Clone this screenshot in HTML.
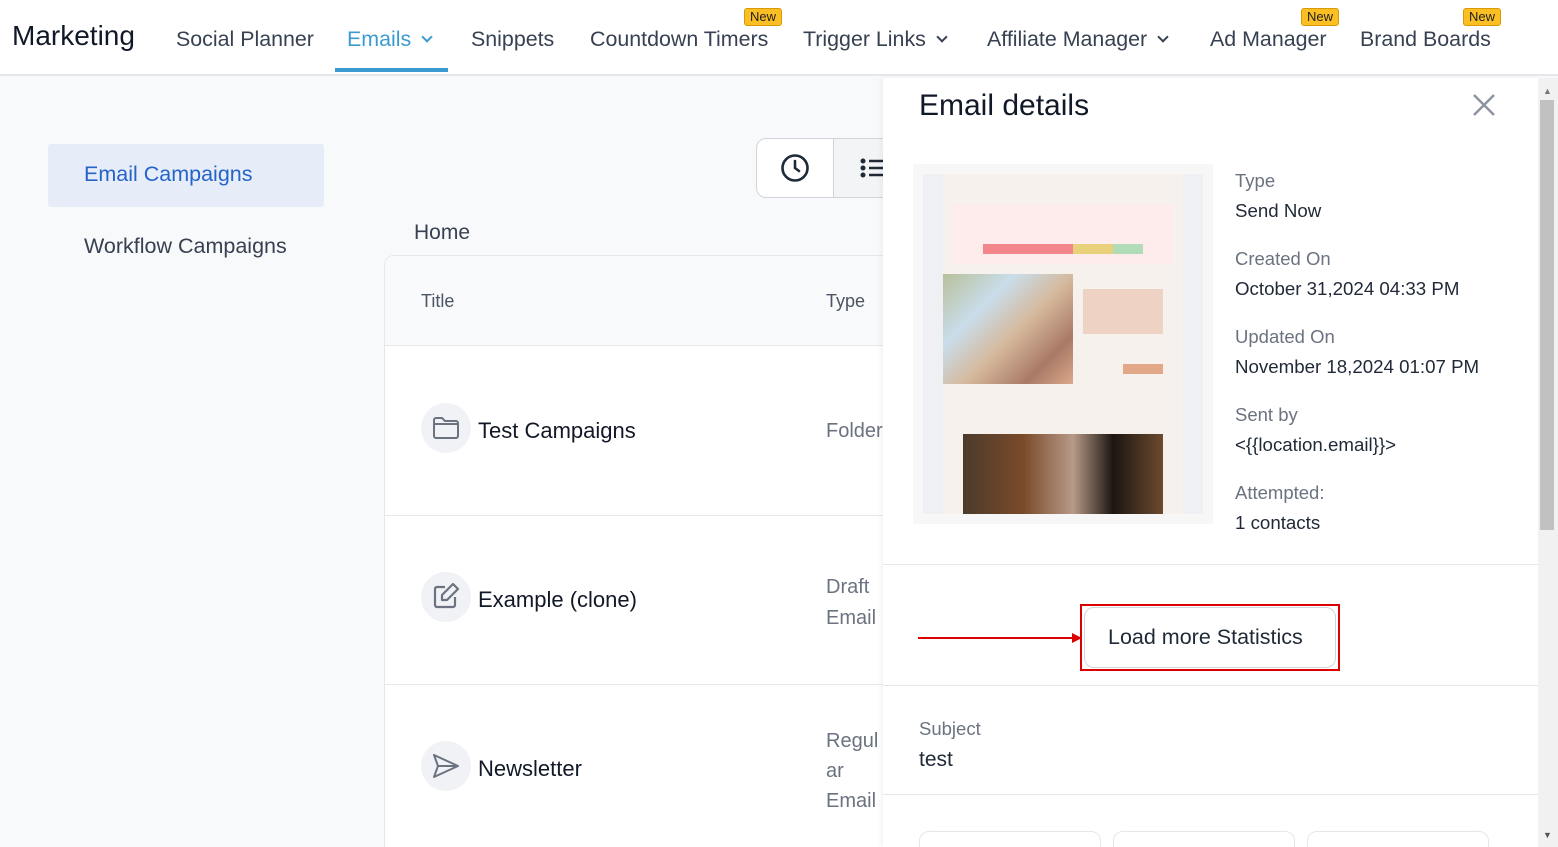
<!DOCTYPE html>
<html><head><meta charset="utf-8"><style>
*{box-sizing:border-box;margin:0;padding:0}
html,body{width:1558px;height:847px;overflow:hidden}
body{background:#f8f9fb;font-family:"Liberation Sans",sans-serif;position:relative;color:#111827}
.a{position:absolute;white-space:nowrap}
.nav{font-size:21.4px;color:#374151;top:27px}
.new{position:absolute;background:#fbbf24;border:1px solid #d99a06;color:#222;font-size:13px;padding:0 5px;border-radius:3px;height:18px;line-height:16px}
.chev{display:inline-block;width:8px;height:8px;border-right:2.5px solid currentColor;border-bottom:2.5px solid currentColor;transform:rotate(45deg);margin-left:12px;position:relative;top:-5px}
.lbl{color:#6b7280;font-size:18.5px}
.val{color:#1f2937;font-size:18.7px}
.circ{position:absolute;width:50px;height:50px;border-radius:50%;background:#f1f2f5}
</style></head><body>
<div class="a" style="left:0;top:0;width:1558px;height:76px;background:#fff;border-bottom:2px solid #e5e7eb"></div>
<div class="a" style="left:12px;top:20px;font-size:28px;color:#111827">Marketing</div>
<div class="a nav" style="left:176px">Social Planner</div>
<div class="a nav" style="left:347px;color:#3b9bd0">Emails<span class="chev"></span></div>
<div class="a" style="left:335px;top:68px;width:113px;height:4px;background:#3b9bd0"></div>
<div class="a nav" style="left:471px">Snippets</div>
<div class="a nav" style="left:590px">Countdown Timers</div>
<div class="new" style="left:744px;top:8px">New</div>
<div class="a nav" style="left:803px">Trigger Links<span class="chev"></span></div>
<div class="a nav" style="left:987px">Affiliate Manager<span class="chev"></span></div>
<div class="a nav" style="left:1210px">Ad Manager</div>
<div class="new" style="left:1301px;top:8px">New</div>
<div class="a nav" style="left:1360px">Brand Boards</div>
<div class="new" style="left:1463px;top:8px">New</div>

<div class="a" style="left:48px;top:144px;width:276px;height:63px;background:#e6edf8;border-radius:3px"></div>
<div class="a" style="left:84px;top:162px;font-size:21.5px;color:#2563c8">Email Campaigns</div>
<div class="a" style="left:84px;top:234px;font-size:21.5px;color:#374151">Workflow Campaigns</div>

<div class="a" style="left:756px;top:138px;width:140px;height:60px;background:#fff;border:1px solid #d1d5db;border-radius:10px"></div>
<div class="a" style="left:833px;top:139px;width:60px;height:58px;background:#f3f4f6;border-left:1px solid #d1d5db"></div>
<svg class="a" style="left:780px;top:153px" width="30" height="30" viewBox="0 0 30 30"><circle cx="15" cy="15" r="12.5" fill="none" stroke="#1f2937" stroke-width="2.6"/><path d="M15 8v7l4 3" fill="none" stroke="#1f2937" stroke-width="2.6" stroke-linecap="round"/></svg>
<svg class="a" style="left:859px;top:157px" width="26" height="22"><circle cx="4" cy="4" r="2.5" fill="#1f2937"/><circle cx="4" cy="11" r="2.5" fill="#1f2937"/><circle cx="4" cy="18" r="2.5" fill="#1f2937"/><path d="M10 4h16M10 11h16M10 18h16" stroke="#1f2937" stroke-width="2.6"/></svg>

<div class="a" style="left:414px;top:221px;font-size:21px;color:#374151">Home</div>
<div class="a" style="left:384px;top:255px;width:520px;height:600px;background:#fff;border:1px solid #e5e7eb;border-radius:10px"></div>
<div class="a" style="left:385px;top:256px;width:520px;height:90px;background:#f9fafb;border-bottom:1px solid #e5e7eb;border-radius:10px 0 0 0"></div>
<div class="a" style="left:421px;top:291px;font-size:18px;color:#4b5563">Title</div>
<div class="a" style="left:826px;top:291px;font-size:18px;color:#4b5563">Type</div>
<div class="a" style="left:385px;top:515px;width:520px;height:1px;background:#e5e7eb"></div>
<div class="a" style="left:385px;top:684px;width:520px;height:1px;background:#e5e7eb"></div>
<div class="circ" style="left:421px;top:403px"></div>
<svg class="a" style="left:431px;top:413px" width="30" height="30" viewBox="0 0 30 30"><path d="M3 7a2 2 0 0 1 2-2h6l3 3h11a2 2 0 0 1 2 2v13a2 2 0 0 1-2 2H5a2 2 0 0 1-2-2z" fill="none" stroke="#6b7280" stroke-width="2"/><path d="M3 11h24" stroke="#6b7280" stroke-width="2"/></svg>
<div class="a" style="left:478px;top:418px;font-size:22px">Test Campaigns</div>
<div class="a" style="left:826px;top:420px;font-size:20px;color:#6b7280">Folder</div>
<div class="circ" style="left:421px;top:572px"></div>
<svg class="a" style="left:431px;top:581px" width="30" height="30" viewBox="0 0 30 30"><path d="M14 6H6a2 2 0 0 0-2 2v16a2 2 0 0 0 2 2h16a2 2 0 0 0 2-2v-8" fill="none" stroke="#6b7280" stroke-width="2.2"/><path d="M22 3l5 5-11 11h-5v-5z" fill="none" stroke="#6b7280" stroke-width="2.2" stroke-linejoin="round"/></svg>
<div class="a" style="left:478px;top:587px;font-size:22px">Example (clone)</div>
<div class="a" style="left:826px;top:572px;font-size:20px;color:#6b7280;line-height:31px">Draft<br>Email</div>
<div class="circ" style="left:421px;top:741px"></div>
<svg class="a" style="left:431px;top:751px" width="30" height="30" viewBox="0 0 30 30"><path d="M3 4l24 11-24 11 4-11z M7 15h20" fill="none" stroke="#6b7280" stroke-width="2" stroke-linejoin="round"/></svg>
<div class="a" style="left:478px;top:756px;font-size:22px">Newsletter</div>
<div class="a" style="left:826px;top:726px;font-size:20px;color:#6b7280;line-height:30px">Regul<br>ar<br>Email</div>

<!-- panel -->
<div class="a" style="left:883px;top:78px;width:655px;height:769px;background:#fff;box-shadow:-2px 0 6px rgba(0,0,0,.05)"></div>
<div class="a" style="left:1538px;top:78px;width:20px;height:769px;background:#f1f1f1"></div>
<div class="a" style="left:1540px;top:100px;width:14px;height:430px;background:#c1c1c1"></div>
<div class="a" style="left:1543px;top:86px;font-size:9px;color:#777">▲</div>
<div class="a" style="left:1543px;top:830px;font-size:9px;color:#555">▼</div>
<div class="a" style="left:919px;top:89px;font-size:30px;color:#111827">Email details</div>
<svg class="a" style="left:1472px;top:93px" width="24" height="24"><path d="M2 2l20 20M22 2L2 22" stroke="#8b93a1" stroke-width="2.4"/></svg>
<div class="a" style="left:913px;top:164px;width:300px;height:360px;background:#f7f7f8;overflow:hidden">
 <div style="position:absolute;left:10px;top:10px;width:280px;height:340px;background:#eef0f3"></div>
 <div style="position:absolute;left:30px;top:10px;width:240px;height:340px;background:#f6f1ed"></div>
 <div style="position:absolute;left:40px;top:40px;width:220px;height:60px;background:#fdeceb"></div>
 <div style="position:absolute;left:70px;top:80px;width:90px;height:10px;background:#f2868a"></div>
 <div style="position:absolute;left:160px;top:80px;width:40px;height:10px;background:#e9d07a"></div>
 <div style="position:absolute;left:200px;top:80px;width:30px;height:10px;background:#b0dcb8"></div>
 <div style="position:absolute;left:30px;top:110px;width:130px;height:110px;background:linear-gradient(135deg,#b8c09a,#c9ddea 30%,#d5b89c 55%,#a97a66 80%,#dba88a)"></div>
 <div style="position:absolute;left:170px;top:125px;width:80px;height:45px;background:#eed3c4"></div>
 <div style="position:absolute;left:210px;top:200px;width:40px;height:10px;background:#e3a888"></div>
 <div style="position:absolute;left:50px;top:270px;width:200px;height:80px;background:linear-gradient(90deg,#4b3b2c,#7a4a2a 30%,#b79a88 55%,#1c1612 75%,#6c4a2e)"></div>
</div>
<div class="a lbl" style="left:1235px;top:170px">Type</div>
<div class="a val" style="left:1235px;top:200px">Send Now</div>
<div class="a lbl" style="left:1235px;top:248px">Created On</div>
<div class="a val" style="left:1235px;top:278px">October 31,2024 04:33 PM</div>
<div class="a lbl" style="left:1235px;top:326px">Updated On</div>
<div class="a val" style="left:1235px;top:356px">November 18,2024 01:07 PM</div>
<div class="a lbl" style="left:1235px;top:404px">Sent by</div>
<div class="a val" style="left:1235px;top:434px">&lt;{{location.email}}&gt;</div>
<div class="a lbl" style="left:1235px;top:482px">Attempted:</div>
<div class="a val" style="left:1235px;top:512px">1 contacts</div>
<div class="a" style="left:883px;top:564px;width:655px;height:1px;background:#e5e7eb"></div>
<div class="a" style="left:918px;top:637px;width:158px;height:1.5px;background:#d00"></div>
<svg class="a" style="left:1072px;top:632px" width="10" height="12"><path d="M0 1l10 5-10 5z" fill="#d00"/></svg>
<div class="a" style="left:1080px;top:604px;width:260px;height:67px;border:2px solid #d00"></div>
<div class="a" style="left:1084px;top:607px;width:252px;height:61px;border:1px solid #d1d5db;border-radius:10px;background:#fff"></div>
<div class="a" style="left:1108px;top:625px;font-size:21.5px;color:#1f2937">Load more Statistics</div>
<div class="a" style="left:883px;top:685px;width:655px;height:1px;background:#e5e7eb"></div>
<div class="a lbl" style="left:919px;top:718px">Subject</div>
<div class="a" style="left:919px;top:748px;font-size:21px;color:#1f2937">test</div>
<div class="a" style="left:883px;top:794px;width:655px;height:1px;background:#e5e7eb"></div>
<div class="a" style="left:919px;top:831px;width:182px;height:30px;border:1px solid #e5e7eb;border-radius:10px"></div>
<div class="a" style="left:1113px;top:831px;width:182px;height:30px;border:1px solid #e5e7eb;border-radius:10px"></div>
<div class="a" style="left:1307px;top:831px;width:182px;height:30px;border:1px solid #e5e7eb;border-radius:10px"></div>
</body></html>
